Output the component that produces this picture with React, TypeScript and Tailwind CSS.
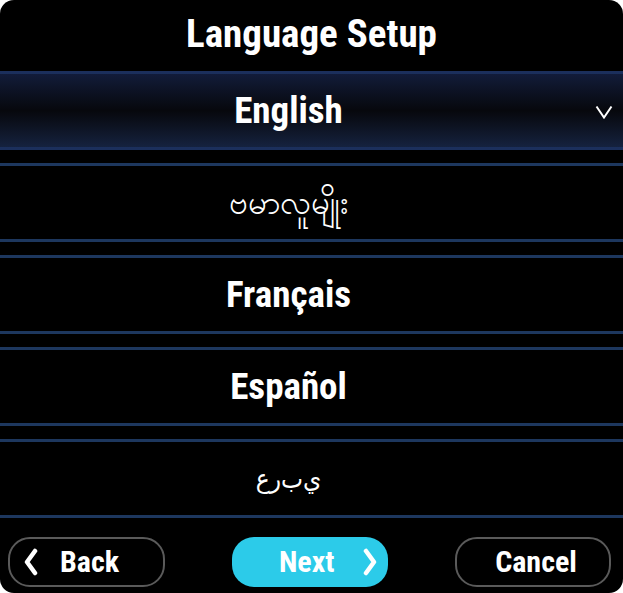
import React from "react";

const font: React.CSSProperties = {
  fontFamily: 'Roboto, "Liberation Sans", sans-serif',
  fontStretch: "75%",
};

type Row = { label: React.ReactNode; key: string; className: string; selected?: boolean };

const rows: Row[] = [
  { key: "en", label: "English", className: "text-[37px] font-bold", selected: true },
  { key: "my", label: "ဗမာလူမျိုး", className: "text-[33px]" },
  { key: "fr", label: "Français", className: "text-[37px] font-bold" },
  { key: "es", label: "Español", className: "text-[37px] font-bold" },
  {
    key: "ar",
    // the device draws the letters unjoined, left to right
    label: <bdo dir="ltr">{"\uFEC9\uFEAD\uFE8F\uFEF1"}</bdo>,
    className: "text-[26px] font-['DejaVu_Sans',sans-serif]",
  },
];

function LanguageRow({ row }: { row: Row }) {
  return (
    <div
      className={
        "relative flex h-[79px] items-center justify-center border-y-[3px] pr-[46px] " +
        (row.selected
          ? "border-[#1b2f5c] bg-gradient-to-b from-[#121c3a] via-[#07080d] to-[#15223f]"
          : "border-[#1d375e] bg-black")
      }
    >
      <span className={"leading-none text-white " + row.className}>{row.label}</span>
      {row.selected && (
        <svg className="absolute right-[10px] top-[31px]" width="18" height="14" viewBox="0 0 18 14">
          <polyline points="1.5,1.5 9,12.5 16.5,1.5" fill="none" stroke="white" strokeWidth="2" />
        </svg>
      )}
    </div>
  );
}

export default function App() {
  return (
    <div className="min-h-screen bg-white" style={font}>
      <div className="flex h-[593px] w-[623px] flex-col overflow-hidden rounded-[14px] bg-black">
        <div className="flex h-[71px] items-center justify-center pb-[3px]">
          <h1 className="text-[39px] font-bold leading-none text-white">Language Setup</h1>
        </div>
        <div className="flex flex-col gap-[13px]">
          {rows.map((r) => (
            <LanguageRow key={r.key} row={r} />
          ))}
        </div>
        <div className="flex items-start justify-between pl-[8px] pr-[12px] pt-[19px]">
          <button className="relative flex h-[50px] w-[157px] items-center rounded-[22px] border-2 border-[#5a5a5a] bg-black text-white">
            <svg className="absolute left-[13px]" width="16" height="28" viewBox="0 0 16 28">
              <polyline points="12,3 4,14 12,25" fill="none" stroke="white" strokeWidth="4.5" strokeLinecap="round" strokeLinejoin="round" />
            </svg>
            <span className="ml-[50px] text-[30px] font-bold leading-none">Back</span>
          </button>
          <button className="relative flex h-[50px] w-[156px] items-center rounded-[22px] bg-[#2ccbe9] text-white">
            <span className="ml-[47px] text-[30px] font-bold leading-none">Next</span>
            <svg className="absolute right-[10px]" width="16" height="28" viewBox="0 0 16 28">
              <polyline points="4,3 12,14 4,25" fill="none" stroke="white" strokeWidth="4.5" strokeLinecap="round" strokeLinejoin="round" />
            </svg>
          </button>
          <button className="flex h-[50px] w-[156px] items-center justify-center rounded-[22px] border-2 border-[#5a5a5a] bg-black pl-[6px] text-white">
            <span className="text-[30px] font-bold leading-none">Cancel</span>
          </button>
        </div>
      </div>
    </div>
  );
}
